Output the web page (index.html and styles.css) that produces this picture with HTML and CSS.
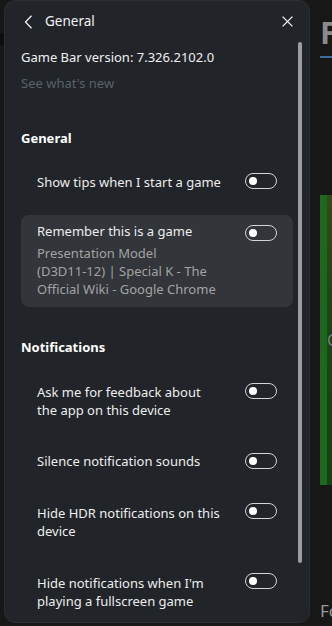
FILE: index.html
```html
<!DOCTYPE html>
<html lang="en">
<head>
<meta charset="utf-8">
<title>General</title>
<link rel="stylesheet" href="styles.css">
</head>
<body>
<div class="screen">
  <div class="edge-left"><div class="edge-band"></div></div>

  <section class="panel">
    <header class="panel-header">
      <svg class="icon-back" width="9" height="14" viewBox="0 0 9 14"><path d="M7.5 0.8 L1.5 7 L7.5 13.2" fill="none" stroke="#f2f2f2" stroke-width="1.3"/></svg>
      <h1 class="panel-title">General</h1>
      <svg class="icon-close" width="11" height="11" viewBox="0 0 11 11"><path d="M0.6 0.6 L10.4 10.4 M10.4 0.6 L0.6 10.4" fill="none" stroke="#f2f2f2" stroke-width="1.3"/></svg>
    </header>

    <div class="panel-body">
      <div class="content">
        <p class="version">Game Bar version: 7.326.2102.0</p>
        <p class="whatsnew">See what's new</p>

        <h2 class="section-title section-general">General</h2>
        <div class="row row-first">
          <span class="label">Show tips when I start a game</span>
          <span class="toggle"><span class="knob"></span></span>
        </div>

        <div class="row card">
          <div class="label">
            <div class="card-title">Remember this is a game</div>
            <div class="card-sub">Presentation Model<br>(D3D11-12) | Special K - The<br>Official Wiki - Google Chrome</div>
          </div>
          <span class="toggle toggle-card"><span class="knob"></span></span>
        </div>

        <h2 class="section-title section-notif">Notifications</h2>
        <div class="row row-n1">
          <span class="label">Ask me for feedback about<br>the app on this device</span>
          <span class="toggle"><span class="knob"></span></span>
        </div>
        <div class="row row-n2">
          <span class="label">Silence notification sounds</span>
          <span class="toggle toggle-down"><span class="knob"></span></span>
        </div>
        <div class="row row-n3">
          <span class="label">Hide HDR notifications on this<br>device</span>
          <span class="toggle toggle-up"><span class="knob"></span></span>
        </div>
        <div class="row row-n3">
          <span class="label">Hide notifications when I'm<br>playing a fullscreen game</span>
          <span class="toggle toggle-up"><span class="knob"></span></span>
        </div>
      </div>
      <div class="scrollbar"></div>
    </div>
  </section>

  <div class="backdrop">
    <div class="bd-title">F</div>
    <div class="bd-line"></div>
    <div class="bd-green"><span class="g1"></span><span class="g2"><span class="g2-glyph">C</span></span></div>
    <div class="bd-foot">Fo</div>
  </div>
</div>
</body>
</html>
```

FILE: styles.css
```css
* { box-sizing: border-box; }

html, body {
  margin: 0;
  padding: 0;
  background: #171717;
  width: 332px;
  height: 626px;
  overflow: hidden;
  font-family: "Noto Sans", "Open Sans", sans-serif;
}

.screen {
  display: flex;
  width: 332px;
  height: 626px;
}

.edge-left {
  width: 4px;
  flex: none;
}
.edge-band {
  margin-top: 33px;
  height: 12px;
  background: #0e0e0e;
}

.panel {
  width: 306px;
  height: 623px;
  flex: none;
  background: #212428;
  border: 1px solid #2b2e33;
  border-radius: 11px;
  display: flex;
  flex-direction: column;
  overflow: hidden;
}

.panel-header {
  height: 40px;
  flex: none;
  display: flex;
  align-items: center;
  padding: 0 16px 0 19px;
}
.icon-back { flex: none; margin-top: 1px; }
.panel-title {
  margin: 0 0 0 12px;
  flex: 1;
  font-size: 13.5px;
  font-weight: 400;
  color: #f2f2f2;
  line-height: 18px;
}
.icon-close { flex: none; }

.panel-body {
  flex: 1;
  display: flex;
  min-height: 0;
}

.content {
  width: 288px;
  flex: none;
  padding: 7px 0 0 16px;
  font-size: 13px;
  line-height: 18px;
  color: #ededed;
}

.scrollbar {
  flex: none;
  width: 4px;
  margin-left: 5px;
  margin-top: 1px;
  height: 521px;
  border-radius: 2px;
  background: #9c9ea2;
}

p { margin: 0; }

.version { color: #f0f0f0; }
.whatsnew { margin-top: 8px; color: #59626d; }

.section-title {
  margin: 0;
  font-size: 13px;
  line-height: 18px;
  font-weight: 700;
  color: #ffffff;
}
.section-general { margin-top: 37px; }
.section-notif { margin-top: 31px; }

.row {
  display: flex;
  justify-content: space-between;
  align-items: flex-start;
  padding: 7px 16px 9px 16px;
  width: 272px;
}
.row-first { margin-top: 19px; }
.row-n1 { margin-top: 20px; }
.row-n2 { margin-top: 17px; }
.row-n3 { margin-top: 18px; }

.label { flex: 1; }

.card {
  margin-top: 15px;
  background: #323539;
  border-radius: 8px;
}
.card-title { margin-bottom: 4px; }
.card-sub { color: #a3a3a3; }

.toggle {
  flex: none;
  width: 32px;
  height: 16px;
  border: 1.4px solid #d4d4d4;
  border-radius: 8px;
  display: flex;
  align-items: center;
  padding-left: 3px;
}
.toggle-card { margin-top: 3px; }
.toggle-down { margin-top: 1px; }
.toggle-up { margin-top: -1px; }
.knob {
  width: 8px;
  height: 8px;
  border-radius: 50%;
  background: #ffffff;
}

.backdrop {
  flex: 1;
  padding-left: 10px;
  display: flex;
  flex-direction: column;
  overflow: hidden;
}
.bd-title {
  margin-top: 14px;
  font-family: "Noto Sans", sans-serif;
  font-weight: 700;
  font-size: 31px;
  line-height: 36px;
  color: #8a8a8a;
}
.bd-line {
  margin-top: 6px;
  height: 2px;
  background: #3b6c9b;
}
.bd-green {
  margin-top: 137px;
  height: 290px;
  display: flex;
}
.g1 { width: 7px; background: #1d691c; }
.g2 {
  flex: 1;
  background: linear-gradient(#3a4519 0%, #22401c 40%, #1b3d1b 100%);
  overflow: hidden;
}
.g2-glyph {
  display: block;
  margin-top: 136px;
  font-size: 16px;
  line-height: 18px;
  color: #7a7a7a;
}
.bd-foot {
  margin-top: 116px;
  font-size: 17px;
  line-height: 20px;
  color: #9a9a9a;
  white-space: nowrap;
}
```
